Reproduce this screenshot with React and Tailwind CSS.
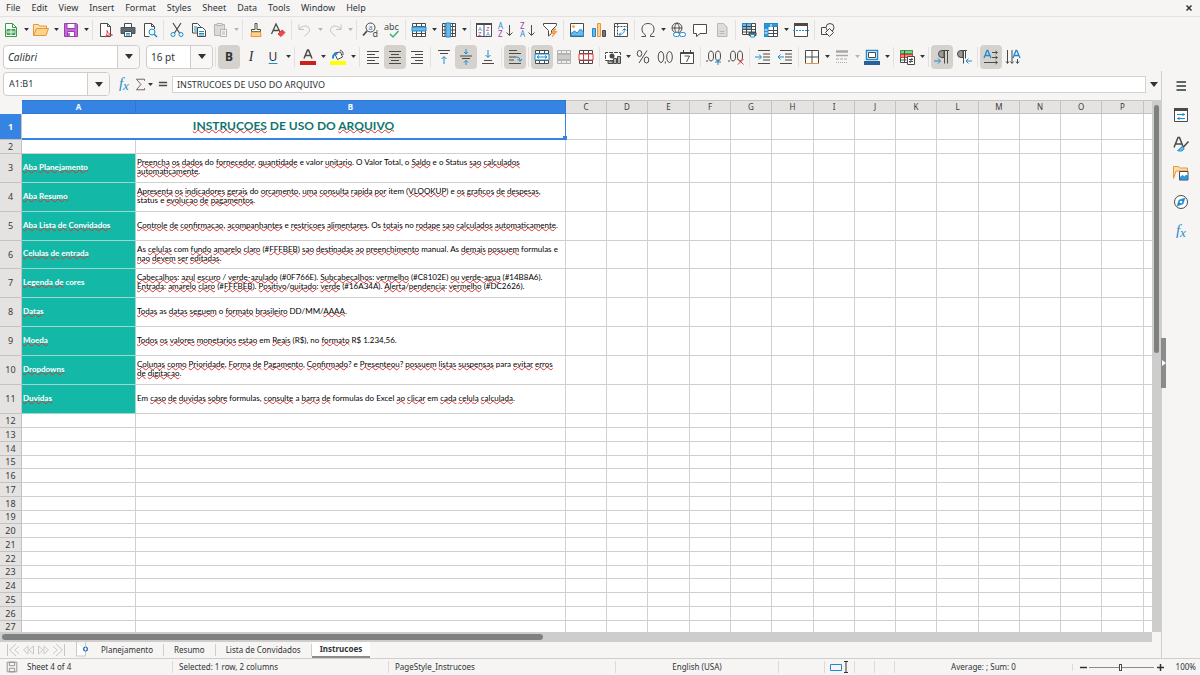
import { useState } from "react";

const MENUS = [
  "File",
  "Edit",
  "View",
  "Insert",
  "Format",
  "Styles",
  "Sheet",
  "Data",
  "Tools",
  "Window",
  "Help",
];

const COLUMNS = "ABCDEFGHIJKLMNOPQRSTUVWXYZ".split("");

const ROW_COUNT = 60;

const CONTENT = {
  3: ["Aba Planejamento", [
    "Preencha os dados do fornecedor, quantidade e valor unitario. O Valor Total, o Saldo e o Status sao calculados",
    "automaticamente.",
  ]],
  4: ["Aba Resumo", [
    "Apresenta os indicadores gerais do orcamento, uma consulta rapida por item (VLOOKUP) e os graficos de despesas,",
    "status e evolucao de pagamentos.",
  ]],
  5: ["Aba Lista de Convidados", [
    "Controle de confirmacao, acompanhantes e restricoes alimentares. Os totais no rodape sao calculados automaticamente.",
  ]],
  6: ["Celulas de entrada", [
    "As celulas com fundo amarelo claro (#FFFBEB) sao destinadas ao preenchimento manual. As demais possuem formulas e",
    "nao devem ser editadas.",
  ]],
  7: ["Legenda de cores", [
    "Cabecalhos: azul escuro / verde-azulado (#0F766E). Subcabecalhos: vermelho (#C8102E) ou verde-agua (#14B8A6).",
    "Entrada: amarelo claro (#FFFBEB). Positivo/quitado: verde (#16A34A). Alerta/pendencia: vermelho (#DC2626).",
  ]],
  8: ["Datas", ["Todas as datas seguem o formato brasileiro DD/MM/AAAA."]],
  9: ["Moeda", ["Todos os valores monetarios estao em Reais (R$), no formato R$ 1.234,56."]],
  10: ["Dropdowns", [
    "Colunas como Prioridade, Forma de Pagamento, Confirmado? e Presenteou? possuem listas suspensas para evitar erros",
    "de digitacao.",
  ]],
  11: ["Duvidas", ["Em caso de duvidas sobre formulas, consulte a barra de formulas do Excel ao clicar em cada celula calculada."]],
};

const SHEETS = ["Planejamento", "Resumo", "Lista de Convidados", "Instrucoes"];

// words the spell checker accepts
const KNOWN = new Set(
  "do e valor O Valor Total o Status item status Os no As com manual formulas cores as em para R a Em Excel DD MM DE USO DO".split(" ")
);

const INK = "#4a4a48";
const BLUE = "#1e8bcd";

const Spell = ({ text }) =>
  text.split(/([A-Za-z0-9]+(?:-[A-Za-z]+)*)/).map((part, i) =>
    i % 2 === 0 || KNOWN.has(part) || /\d/.test(part) ? (
      part
    ) : (
      <span
        key={i}
        className="underline decoration-[#e03030] decoration-wavy decoration-1 -underline-offset-1 [text-decoration-skip-ink:none]"
      >
        {part}
      </span>
    )
  );

const Svg = ({ children, size = 16 }) => (
  <svg
    width={size}
    height={size}
    viewBox="0 0 16 16"
    fill="none"
    stroke={INK}
    strokeWidth="1"
    aria-hidden="true"
    className="shrink-0 overflow-visible"
  >
    {children}
  </svg>
);

const Glyph = ({ x, y, size, color = INK, children }) => (
  <text x={x} y={y} fontSize={size} fill={color} stroke="none" fontFamily="Noto Sans">
    {children}
  </text>
);

const ICONS = {
  newSheet: (
    <>
      <path d="M2.500 1.500h7l4 4v9h-11z" fill="#fff" stroke="#3c9a4b" />
      <path d="M9.500 1.500v4h4" stroke="#3c9a4b" />
      <path d="M4 7.500h8v5h-8z" fill="#5cba68" stroke="#3c9a4b" />
      <path d="M4 10h8M8 7v6" stroke="#e5f5e7" />
    </>
  ),
  open: (
    <>
      <path d="M.5 13.500v-11h5l1 1.500h7v3" fill="#fbe0ae" stroke="#e8963c" />
      <path d="M.5 13.500l3-7h12l-2.500 7z" fill="#fbd38c" stroke="#e8963c" />
    </>
  ),
  save: (
    <>
      <path d="M1.500 1.500h12l1 1v12h-13z" fill="#c46bd0" stroke="#9b3fae" />
      <path d="M4 1.500h8v5h-8z" fill="#fff" stroke="#9b3fae" />
      <path d="M4.500 9.500h7v5h-7z" fill="#fff" stroke="#9b3fae" />
      <path d="M6 11v3" stroke="#9b3fae" strokeWidth="1.500" />
    </>
  ),
  pdf: (
    <>
      <path d="M2.500 1.500h7l3 3v10h-10z" fill="#fff" />
      <path d="M9.500 1.500v3h3" />
      <path d="M7 15c2-2 2.500-4.500 2-6.500 1 3 3.500 4.500 5.500 4.500-2-.6-5 0-7.500 2z" stroke="#e03b3b" />
    </>
  ),
  print: (
    <>
      <path d="M4.500 5v-3.500h7V5" fill="#fff" />
      <path d="M1 5.500h14v6H1z" fill="#5e6a72" stroke="#4a5258" />
      <path d="M4.500 9.500h7v5h-7z" fill="#fff" />
      <path d="M6 11.500h4M6 13h4" stroke={BLUE} />
    </>
  ),
  preview: (
    <>
      <path d="M12.500 7V4.500l-3-3h-7v13h5" fill="#fff" />
      <path d="M9.500 1.500v3h3" />
      <circle cx="10" cy="10" r="3" stroke={BLUE} fill="#eaf5fc" />
      <path d="M12.200 12.200l2.800 2.800" stroke={BLUE} strokeWidth="1.500" />
    </>
  ),
  cut: (
    <>
      <path d="M4 1l6.500 10M12 1L5.500 11" strokeWidth="1.200" />
      <circle cx="4" cy="12.500" r="2" stroke={BLUE} />
      <circle cx="12" cy="12.500" r="2" stroke={BLUE} />
    </>
  ),
  copy: (
    <>
      <path d="M1.500 1.500h5l3 3v6.500h-8z" fill="#fff" />
      <path d="M3 5h3M3 7h3M3 9h3" stroke={BLUE} />
      <path d="M6.500 5.500h5l3 3v6h-8z" fill="#fff" />
      <path d="M8 9.500h5M8 11.500h5M8 13h5" stroke={BLUE} />
    </>
  ),
  paste: (
    <g stroke="#b4b4b2">
      <path d="M1.500 2.500h10v11h-10z" fill="#dadad8" />
      <path d="M4 1.500h5v2h-5z" fill="#eee" />
      <path d="M7.500 7.500h6v7h-6z" fill="#f2f2f0" />
      <path d="M9 10h3M9 12h3" />
    </g>
  ),
  clone: (
    <>
      <path d="M7 1.500h2v6h3.500v2h-9v-2H7z" fill="#fff" />
      <path d="M3.500 10l-.5 4.500h10l-.5-4.500z" fill="#fbd38c" stroke="#e8963c" />
    </>
  ),
  clear: (
    <>
      <path d="M1.500 12L6 2l4.500 9M3.500 8.500h5" strokeWidth="1.300" />
      <path d="M8 12l4-4 3 2.500-4 4z" fill="#f04848" stroke="#e03b3b" />
    </>
  ),
  undo: <path d="M2 2.500v5h5M2.500 7C5 3 12 3 12.500 7.500c.3 2.500-2 4.500-5 6.500" stroke="#c2c2c0" />,
  redo: <path d="M14 2.500v5H9M13.500 7C11 3 4 3 3.500 7.500c-.3 2.500 2 4.500 5 6.500" stroke="#c2c2c0" />,
  find: (
    <>
      <circle cx="8.500" cy="5.500" r="4.500" />
      <path d="M5 9l-4 4.500" strokeWidth="1.800" />
      <Glyph x="6.500" y="8" size="7" color={BLUE}>a</Glyph>
      <Glyph x="10.500" y="15" size="9">d</Glyph>
    </>
  ),
  spelling: (
    <>
      <Glyph x="0" y="8" size="9">abc</Glyph>
      <path d="M6 12l3 3 5.500-6" stroke="#3bb36a" strokeWidth="1.500" />
    </>
  ),
  rows: (
    <>
      <path d="M1.500 1.500h13v13h-13z" fill="#fff" />
      <path d="M1.500 4.500h13M1.500 11.500h13M5.500 1.500v13M10.500 1.500v13" />
      <path d="M1 5h14v4H1z" fill="#6cb8ec" stroke={BLUE} />
    </>
  ),
  cols: (
    <>
      <path d="M1.500 1.500h13v13h-13z" fill="#fff" />
      <path d="M1.500 4.500h13M1.500 8h13M1.500 11.500h13M11.500 1.500v13M4 1.500v13" />
      <path d="M5 1h4.500v14H5z" fill="#6cb8ec" stroke={BLUE} />
    </>
  ),
  sort: (
    <>
      <path d="M.5 1.500h15v13H.5z" fill="#fff" />
      <path d="M0 2h16" strokeWidth="2" />
      <path d="M8 2v12.500" />
      <Glyph x="2" y="8.500" size="6" color={BLUE}>A</Glyph>
      <Glyph x="2" y="14" size="6" color="#9b3fae">Z</Glyph>
      <Glyph x="10" y="8.500" size="6" color="#9b3fae">Z</Glyph>
      <Glyph x="10" y="14" size="6" color={BLUE}>A</Glyph>
    </>
  ),
  asc: (
    <>
      <Glyph x="0" y="7" size="8" color={BLUE}>A</Glyph>
      <Glyph x="0" y="15" size="8" color="#9b3fae">Z</Glyph>
      <path d="M11.500 3v10M8.500 10.500l3 3 3-3" />
    </>
  ),
  desc: (
    <>
      <Glyph x="0" y="7" size="8" color="#9b3fae">Z</Glyph>
      <Glyph x="0" y="15" size="8" color={BLUE}>A</Glyph>
      <path d="M11.500 3v10M8.500 10.500l3 3 3-3" />
    </>
  ),
  filter: (
    <>
      <path d="M1.500 1.500h13v2l-5 5v3l-3 2.500V8.500l-5-5z" fill="#fff" />
      <path d="M12 7l-3 4.500h3L10 15l5-5.500h-3L14 7z" fill="#f7a64a" stroke="#e8862c" strokeWidth=".6" />
    </>
  ),
  image: (
    <>
      <path d="M1.500 1.500h13v13h-13z" fill="#fff" />
      <circle cx="4.500" cy="4.500" r="1.500" fill="#f7a64a" stroke="none" />
      <path d="M2 14v-2.500L5.500 9 8 11l3.500-4 3 3v4z" fill="#6cb8ec" stroke={BLUE} />
    </>
  ),
  chart: (
    <>
      <path d="M1.500 6.500h3v8h-3z" fill="#6cb8ec" stroke={BLUE} />
      <path d="M6.500 1.500h3v13h-3z" fill="#fbd38c" stroke="#e8963c" />
      <path d="M11.500 8.500h3v6h-3z" fill="#777" />
    </>
  ),
  pivot: (
    <>
      <path d="M1.500 1.500h13v13h-13z" fill="#fff" />
      <path d="M1.500 4.500h13M4.500 1.500v13" strokeDasharray="2 1" />
      <path d="M6 12.500c4 0 5.500-2 5.500-5.500M9.500 8.500l2-2 2 2M8 10.500l-2 2 2 2" stroke={BLUE} />
    </>
  ),
  omega: <path d="M1.500 14.500h4v-1.500C3 11.500 2 9.500 2 7c0-3.500 2.500-5.500 6-5.500s6 2 6 5.500c0 2.500-1 4.500-3.500 6v1.500h4" />,
  link: (
    <>
      <circle cx="7" cy="6" r="5" />
      <path d="M2 6h10M7 1c-3 3-3 7 0 10M7 1c3 3 3 7 0 10" />
      <rect x="3.500" y="10.500" width="6" height="4" rx="2" fill="#fff" stroke={BLUE} />
      <rect x="9.500" y="10.500" width="6" height="4" rx="2" fill="#fff" stroke={BLUE} />
    </>
  ),
  comment: <path d="M1.500 2.500h13v9H8l-3.500 3v-3h-3z" fill="#fff" />,
  doc: <path d="M3.500 1.500h6l3.500 3.500v9.500H3.500zM5.500 9.500h5M5.500 11.500h5" fill="#dcdcda" stroke="#b8b8b6" />,
  printArea: (
    <>
      <path d="M1.500 1.500h13v11h-13z" fill="#fff" />
      <path d="M1.500 1.500h9v6h-9z" fill="#6cb8ec" stroke={BLUE} />
      <path d="M1.500 4.500h13M1.500 7.500h13M1.500 10h13M5.500 1.500v11M10.500 1.500v11" />
      <path d="M8 10.500h7v3H8z" fill="#5e6a72" />
      <path d="M9.500 12.500h4v2.500h-4z" fill="#fff" stroke={BLUE} />
    </>
  ),
  freeze: (
    <>
      <path d="M1.500 1.500h13v13h-13z" fill="#fff" />
      <path d="M5 8.500h9.500M5 11.500h9.500M10.500 5v9.500" />
      <path d="M1.500 1.500h13v3h-13zM1.500 1.500h3.500v13H1.500z" fill="#3b97dc" stroke={BLUE} />
      <path d="M1.500 8h3M1.500 11h3M8 2v3" stroke="#fff" />
    </>
  ),
  split: (
    <>
      <path d="M1.500 1.500h13v13h-13z" fill="#fff" />
      <path d="M1 2.500h14" strokeWidth="3" />
      <path d="M0 8.500h16" stroke={BLUE} strokeDasharray="2 1" />
    </>
  ),
  shapes: (
    <>
      <path d="M1.500 5.500h7v7h-7z" fill="#f6f5f4" />
      <circle cx="10" cy="5.500" r="4" fill="#f6f5f4" />
      <path d="M9.500 6.500l4 4-4 4-4-4z" fill="#f6f5f4" />
    </>
  ),
  fontColor: (
    <>
      <path d="M4 9.500L7.500 1h1L12 9.500M5.500 6.500h5" strokeWidth="1.500" />
      <path d="M0 12h16v4H0z" fill="#c9211e" stroke="none" />
    </>
  ),
  highlight: (
    <>
      <path d="M4.500 4l6-1 2 5-5 2.500z" fill="#fff" />
      <path d="M3 9.500c-.5-4 2-5 4.500-4.500" stroke={BLUE} strokeWidth="2" />
      <path d="M10 1c2.500 1 3.500 2.500 3 5" />
      <path d="M0 12h16v4H0z" fill="#ffff00" stroke="none" />
    </>
  ),
  left: <path d="M2 2.500h12M2 5.500h8M2 8.500h12M2 11.500h8M2 14.500h12" />,
  center: <path d="M2 2.500h12M4 5.500h8M2 8.500h12M4 11.500h8M2 14.500h12" />,
  right: <path d="M2 2.500h12M6 5.500h8M2 8.500h12M6 11.500h8M2 14.500h12" />,
  top: (
    <>
      <path d="M2 1.500h12M4 4.500h8" />
      <path d="M8 15V8M5.500 10L8 7.500l2.500 2.500" stroke={BLUE} />
    </>
  ),
  middle: (
    <>
      <path d="M2 7h12M4 9.500h8" />
      <path d="M8 0v5M6 3l2 2 2-2M8 16v-4.500M6 13.500l2-2 2 2" stroke={BLUE} />
    </>
  ),
  bottom: (
    <>
      <path d="M4 11.500h8M2 14.500h12" />
      <path d="M8 1v7M5.500 6L8 8.500 10.500 6" stroke={BLUE} />
    </>
  ),
  wrap: (
    <>
      <path d="M2 1.500h8M2 4.500h12M2 8h7M2 11h5M2 14.500h12" />
      <path d="M9 8c3 0 4 1 4 4M10.500 10l2.500 2.500 2-2.500" stroke={BLUE} />
    </>
  ),
  merge: (
    <>
      <path d="M1.500 1.500h13v13h-13zM1.500 4.500h13M1.500 11.500h13M5.500 1.500v3M10.500 1.500v3M5.500 11.500v3M10.500 11.500v3" fill="#fff" />
      <path d="M1 5h14v6H1z" fill="#fff" stroke={BLUE} />
      <path d="M3 8h10M5 6.500L3 8l2 1.500M11 6.500L13 8l-2 1.500" stroke={BLUE} />
    </>
  ),
  mergeCells: (
    <g stroke="#b4b4b2">
      <path d="M1.500 1.500h13v13h-13zM1.500 4.500h13M1.500 11.500h13M5.500 1.500v3M10.500 1.500v3M5.500 11.500v3M10.500 11.500v3" fill="#eee" />
      <path d="M1.500 5.500h13v5h-13z" fill="#ccc" />
    </g>
  ),
  unmerge: (
    <>
      <path d="M1.500 1.500h13v13h-13zM1.500 4.500h13M1.500 11.500h13M5.500 1.500v3M10.500 1.500v3M5.500 11.500v3M10.500 11.500v3" fill="#fff" />
      <path d="M1 5h14v6H1zM5.500 5v6M10.500 5v6" fill="#fff" stroke="#e03b3b" />
    </>
  ),
  currency: (
    <>
      <path d="M9 11.500H.5v-8h15V7" fill="#fff" strokeDasharray="4 1" />
      <circle cx="7" cy="7" r="2.500" fill={INK} stroke="none" />
      <path d="M3 13.500v-1.500h5v2.500H3zM8.500 9.500h3v5h-3zM12.500 7.500h3v7h-3z" fill="#b0b0ae" />
    </>
  ),
  percent: (
    <>
      <ellipse cx="4.500" cy="4.500" rx="2.300" ry="3" />
      <ellipse cx="11.500" cy="11" rx="2.300" ry="3" />
      <path d="M12 1.500l-8 12.500" />
    </>
  ),
  number: (
    <>
      <ellipse cx="4" cy="8" rx="2.800" ry="5.500" />
      <ellipse cx="12.500" cy="8" rx="2.800" ry="5.500" />
      <path d="M8.300 12.500v2" />
    </>
  ),
  date: (
    <>
      <path d="M1.500 3.500h13v11h-13z" fill="#fff" />
      <path d="M1.500 4h13" strokeWidth="2" />
      <path d="M4.500 1v3M11.500 1v3M5.500 7h5l-3 6" />
    </>
  ),
  addDecimal: (
    <>
      <ellipse cx="5" cy="7" rx="2.500" ry="5" />
      <ellipse cx="12" cy="7" rx="2.500" ry="5" />
      <path d="M1 11v2" />
      <path d="M12 10v6M9 13h6" stroke={BLUE} />
    </>
  ),
  delDecimal: (
    <>
      <ellipse cx="5" cy="7" rx="2.500" ry="5" />
      <ellipse cx="12" cy="7" rx="2.500" ry="5" />
      <path d="M1 11v2" />
      <path d="M10 10l5.500 5.500M15.500 10L10 15.500" stroke="#e03b3b" />
    </>
  ),
  indent: (
    <>
      <path d="M3 1.500h12M8 5h7M8 8h7M8 11h7M3 14.500h12" />
      <path d="M0 8h6M4 5.500L6.500 8 4 10.500" stroke={BLUE} />
    </>
  ),
  outdent: (
    <>
      <path d="M3 1.500h12M8 5h7M8 8h7M8 11h7M3 14.500h12" />
      <path d="M1 8h6M3.500 5.500L1 8l2.500 2.500" stroke={BLUE} />
    </>
  ),
  borders: (
    <>
      <path d="M1.500 1.500h13v13h-13zM8 1.500v13M1.500 8h13" fill="#fff" />
      <path d="M1 14.500h14" stroke="#e8963c" />
    </>
  ),
  borderStyle: (
    <g stroke="#a8a8a6">
      <path d="M2 2.500h12" strokeWidth="2.500" />
      <path d="M2 6.500h12" strokeWidth="1.500" />
      <path d="M2 10h12" strokeDasharray="3 1" />
      <path d="M2 13.500h12" strokeDasharray="1 1" />
    </g>
  ),
  borderColor: (
    <>
      <path d="M2.500 1.500h11v9h-11z" fill="#fff" stroke={BLUE} strokeWidth="1.500" />
      <path d="M4.500 3.500h7v5h-7z" />
      <path d="M0 12h16v4H0z" fill="#2a6099" stroke="none" />
    </>
  ),
  conditional: (
    <>
      <path d="M1.500 1.500h12v12h-12z" fill="#fff" />
      <path d="M1.500 1.500h12v3h-12z" fill="#7dd08a" stroke="#3c9a4b" />
      <path d="M1.500 5.500h12v3h-12z" fill="#f58a80" stroke="#e03b3b" />
      <path d="M5.500 1.500v12M1.500 11h6" />
      <path d="M8.500 7.500h7v8h-7z" fill="#fff" />
      <path d="M10 10.500h4M10 12.500h4M13 9l-2 5" />
    </>
  ),
  ltr: (
    <>
      <path d="M8 9V1.500M8 1.500h7M10.500 1.500v13M13.500 1.500v13" />
      <path d="M8 1.500a3.500 3.500 0 000 7h2v-7z" fill="#999" />
      <path d="M0 12h6M4 9.500L6.500 12 4 14.500" stroke={BLUE} />
    </>
  ),
  rtl: (
    <>
      <path d="M5 1.500h6M7.500 1.500v13M9.500 1.500v8" />
      <path d="M5 1.500a3.500 3.500 0 000 7h2v-7z" fill="#999" />
      <path d="M10 12h6M12.500 9.500L10 12l2.500 2.500" stroke={BLUE} />
    </>
  ),
  horizontalText: (
    <>
      <path d="M1 9l3-7.500h.8L8 9M2 6.500h5" stroke={BLUE} strokeWidth="1.300" />
      <path d="M9 3.500h5M12.500 2l2 1.500-2 1.500M9 8.500h5M12.500 7l2 1.500-2 1.500M1 13.500h13M12.500 12l2 1.500-2 1.500" />
    </>
  ),
  verticalText: (
    <>
      <path d="M8 9l3-7.500h.8L15 9M9 6.500h5" stroke={BLUE} strokeWidth="1.300" />
      <path d="M2.500 1v13M1 12.500l1.500 2 1.500-2M7 1v13M5.500 12.500l1.500 2 1.500-2M12.500 10v4M11 12.500l1.500 2 1.500-2" />
    </>
  ),
  settings: <path d="M3.500 4h9.500M3.500 8h9.500M3.500 12h9.500" stroke="#2e3436" strokeWidth="1.500" />,
  properties: (
    <>
      <path d="M1.500 1.500h13v13h-13z" fill="#fff" />
      <path d="M1 2.500h14" strokeWidth="3" />
      <path d="M4 7.500h8M4 11.500h8M10 6v3M6 10v3" stroke={BLUE} />
    </>
  ),
  styles: (
    <>
      <path d="M1 11.500L5 1.500h1.500l3.500 9M2.500 8h6" strokeWidth="1.500" />
      <path d="M15.500 5.500L9.500 12" strokeWidth="1.500" />
      <path d="M9.500 10.500l1.500 2c-1 3-4 3-6.500 2 2 0 2-3 5-4z" fill="#6cb8ec" stroke={BLUE} />
    </>
  ),
  gallery: (
    <>
      <path d="M.5 13.500v-12h5l1 1.500h8v3H3z" fill="#fbe0ae" stroke="#e8963c" />
      <path d="M6.500 6.500h8.500v8.500h-8.500z" fill="#fff" />
      <path d="M7 14.500v-2l2.500-2 2 1.500 2-2 1 1v3.500z" fill="#3b97dc" stroke={BLUE} />
    </>
  ),
  navigator: (
    <>
      <circle cx="8" cy="8" r="6.500" fill="#fff" />
      <path d="M12 4L10 10l-6 2 2-6z" fill={BLUE} stroke={BLUE} strokeWidth=".5" />
      <circle cx="8" cy="8" r="1.300" fill="#fff" stroke="none" />
    </>
  ),
  sigma: <path d="M13 3.500v-2H3L8.500 8 3 14.500h10v-2" />,
  equals: <path d="M2.500 6h11M2.500 10h11" strokeWidth="1.800" />,
  addSheet: (
    <>
      <path d="M2.500 0v14h9v-5M11.500 4V0" fill="#fff" stroke="#c8c8c6" />
      <circle cx="11.500" cy="7" r="2.500" fill="#2f6fc0" stroke="none" />
      <path d="M11.500 5.500v3M10 7h3" stroke="#fff" />
    </>
  ),
  saved: (
    <>
      <path d="M2.500 2.500h11v11h-11z" stroke="#8a8a88" />
      <path d="M5 2.500h6v4H5zM5 9.500h6v4H5z" stroke="#8a8a88" />
    </>
  ),
};

const STANDARD = [
  [["newSheet", "New", 1], ["open", "Open", 1], ["save", "Save", 1]],
  [["pdf", "Export as PDF"], ["print", "Print"], ["preview", "Print Preview"]],
  [["cut", "Cut"], ["copy", "Copy"], ["paste", "Paste", 2]],
  [["clone", "Clone Formatting"], ["clear", "Clear Formatting"]],
  [["undo", "Undo", 2], ["redo", "Redo", 2]],
  [["find", "Find and Replace"], ["spelling", "Spelling"]],
  [["rows", "Row", 1], ["cols", "Column", 1]],
  [["sort", "Sort"], ["asc", "Sort Ascending"], ["desc", "Sort Descending"], ["filter", "AutoFilter"]],
  [["image", "Image"], ["chart", "Chart"], ["pivot", "Pivot Table"]],
  [["omega", "Special Character", 1], ["link", "Hyperlink"], ["comment", "Comment"], ["doc", "Headers and Footers"]],
  [["printArea", "Define Print Area"], ["freeze", "Freeze Rows and Columns", 1], ["split", "Split Window"]],
  [["shapes", "Show Draw Functions"]],
];

const FORMATTING = [
  [["fontColor", "Font Color", 1], ["highlight", "Background Color", 1]],
  [["left", "Align Left"], ["center", "Center Horizontally", 0, true], ["right", "Align Right"]],
  [["top", "Align Top"], ["middle", "Center Vertically", 0, true], ["bottom", "Align Bottom"]],
  [["wrap", "Wrap Text", 0, true]],
  [["merge", "Merge and Center", 0, true], ["mergeCells", "Merge Cells"], ["unmerge", "Unmerge Cells"]],
  [["currency", "Format as Currency", 1], ["percent", "Format as Percent"], ["number", "Format as Number"], ["date", "Format as Date"]],
  [["addDecimal", "Add Decimal Place"], ["delDecimal", "Delete Decimal Place"]],
  [["indent", "Increase Indent"], ["outdent", "Decrease Indent"]],
  [["borders", "Borders", 1], ["borderStyle", "Border Style", 2], ["borderColor", "Border Color", 1]],
  [["conditional", "Conditional Formatting", 1]],
  [["ltr", "Left-To-Right", 0, true], ["rtl", "Right-To-Left"]],
  [["horizontalText", "Text direction from left to right", 0, true], ["verticalText", "Text direction from top to bottom"]],
];

const Caret = ({ small, muted }) => (
  <svg
    width={small ? 5 : 8}
    height={small ? 3 : 5}
    viewBox="0 0 8 5"
    fill={muted ? "#b4b4b2" : "#2e3436"}
    aria-hidden="true"
  >
    <path d="M0 0h8L4 5z" />
  </svg>
);

const Separator = () => <span className="mx-0.5 h-5 w-px shrink-0 bg-[#e3e1df]" />;

const ToolButton = ({ label, active, children }) => (
  <button
    aria-label={label}
    className={`flex h-6 w-[22px] shrink-0 items-center justify-center rounded ${active ? "bg-[#d5d1cd]" : ""}`}
  >
    {children}
  </button>
);

const ArrowButton = ({ label, muted }) => (
  <button aria-label={label} className="flex h-6 w-2 shrink-0 items-center justify-center">
    <Caret small muted={muted} />
  </button>
);

const ToolGroups = ({ groups }) =>
  groups.map((group, i) => (
    <div key={i} className="flex items-center">
      {i > 0 && <Separator />}
      {group.map(([icon, label, arrow, active]) => (
        <div key={icon} className="flex items-center">
          <ToolButton label={label} active={active}>
            <Svg>{ICONS[icon]}</Svg>
          </ToolButton>
          {arrow > 0 && <ArrowButton label={`${label} options`} muted={arrow === 2} />}
        </div>
      ))}
    </div>
  ));

const Combo = ({ label, value, className, italic }) => (
  <div className={`relative shrink-0 ${className}`}>
    <select
      aria-label={label}
      className={`block h-6 w-full appearance-none rounded border border-[#cfccc9] bg-white pl-1 text-[10px] leading-4 ${italic ? "italic" : ""}`}
    >
      <option>{value}</option>
    </select>
    <span className="pointer-events-none absolute inset-y-px right-px flex w-[22px] items-center justify-center rounded-r border-l border-[#cfccc9] bg-[#f8f7f6]">
      <Caret />
    </span>
  </div>
);

const FxIcon = () => (
  <svg width="14" height="18" viewBox="0 0 14 18" fill={BLUE} aria-hidden="true">
    <text x="2" y="13" fontSize="15" fontStyle="italic" fontFamily="Liberation Serif">f</text>
    <text x="6" y="15" fontSize="13" fontStyle="italic" fontFamily="Liberation Serif">x</text>
  </svg>
);

const FormulaBar = () => (
  <div className="mb-[3px] flex h-[26px] items-center pl-[3px]">
    <div className="flex h-6 w-[107px] shrink-0 overflow-hidden rounded border border-[#cfccc9] bg-white">
      <input
        aria-label="Name Box"
        defaultValue="A1:B1"
        className="w-full min-w-0 bg-transparent pl-[5px] text-[9px] outline-none"
      />
      <button
        aria-label="Named ranges"
        className="flex w-[22px] shrink-0 items-center justify-center border-l border-[#cfccc9] bg-[#f8f7f6]"
      >
        <Caret />
      </button>
    </div>
    <div className="ml-1 flex items-center">
      <button aria-label="Function Wizard" className="flex w-5 justify-center">
        <FxIcon />
      </button>
      <button aria-label="Select Function" className="flex w-3 justify-center">
        <Svg size={13}>{ICONS.sigma}</Svg>
      </button>
      <ArrowButton label="Function options" />
      <button aria-label="Formula" className="flex w-[18px] justify-center">
        <Svg size={12}>{ICONS.equals}</Svg>
      </button>
    </div>
    <input
      aria-label="Input line"
      defaultValue="INSTRUCOES DE USO DO ARQUIVO"
      className="h-[17px] min-w-0 flex-1 border border-[#d5d3d1] bg-white pl-1 text-[9px] outline-none"
    />
    <button aria-label="Expand Formula Bar" className="flex w-[15px] justify-center">
      <Caret />
    </button>
  </div>
);

const columnWidth = (i) => {
  if (i === 0) return "w-[114px]";
  if (i === 1) return "w-[430px]";
  return [4, 7, 11, 15].includes(i) ? "w-[42px]" : "w-[41px]";
};

const rowHeight = (n) => {
  if (n === 1) return "h-[26px]";
  if (n === 2) return "h-[14px]";
  if (n === 6) return "h-[28px]";
  if (n <= 11) return "h-[29px]";
  return n % 4 === 3 ? "h-[13px]" : "h-[14px]";
};

const GRID_LINE = "border-r border-b border-[#d0d0d0]";

const Row = ({ n }) => {
  const content = CONTENT[n];

  return (
    <tr className={rowHeight(n)}>
      <th
        scope="row"
        className={`border-r border-b border-[#c4c3c1] p-0 text-center text-[9px] leading-3 ${
          n === 1 ? "bg-[#3584e4] font-bold text-white" : "bg-[#e4e3e1] font-normal text-[#3a3a38]"
        }`}
      >
        {n}
      </th>

      {n === 1 && (
        <td
          colSpan={2}
          className="relative border-r border-b-2 border-[#3584e4] p-0 text-center align-middle font-[Lato] text-[12px] leading-5 font-bold text-[#0f766e]"
        >
          <Spell text="INSTRUCOES DE USO DO ARQUIVO" />
          <span className="absolute -right-0.5 -bottom-0.5 size-1 bg-[#3584e4]" />
        </td>
      )}

      {content && (
        <>
          <td className="border-r border-b border-[#9fd8d0] bg-[#14b8a6] p-0 pb-0.5 pl-px align-middle font-[Lato] text-[8px] leading-[9px] font-bold whitespace-nowrap text-white">
            <Spell text={content[0]} />
          </td>
          <td className={`${GRID_LINE} p-0 pb-0.5 pl-px align-middle font-[Lato] text-[8px] leading-[9px] whitespace-nowrap text-black`}>
            {content[1].map((line) => (
              <div key={line}>
                <Spell text={line} />
              </div>
            ))}
          </td>
        </>
      )}

      {COLUMNS.slice(n === 1 || content ? 2 : 0).map((c) => (
        <td key={c} className={`${GRID_LINE} p-0`} />
      ))}
    </tr>
  );
};

const Grid = () => (
  <div className="min-h-0 min-w-0 flex-1 overflow-hidden bg-white">
    <table className="w-px table-fixed border-separate border-spacing-0">
      <colgroup>
        <col className="w-[22px]" />
        {COLUMNS.map((c, i) => (
          <col key={c} className={columnWidth(i)} />
        ))}
      </colgroup>
      <thead>
        <tr className="h-[14px]">
          <td className="bg-[#f6f5f4] p-0" />
          {COLUMNS.map((c, i) => (
            <th
              key={c}
              scope="col"
              className={`border-t border-r border-b p-0 text-center text-[8px] leading-3 ${
                i < 2
                  ? "border-[#2f76cc] bg-[#3584e4] font-bold text-white"
                  : "border-[#c4c3c1] bg-[#e4e3e1] font-normal text-[#3a3a38]"
              }`}
            >
              {c}
            </th>
          ))}
        </tr>
      </thead>
      <tbody>
        {Array.from({ length: ROW_COUNT }, (_, i) => (
          <Row key={i} n={i + 1} />
        ))}
      </tbody>
    </table>
  </div>
);

const TAB_NAV = [
  ["First sheet", "M3.500 2v12M12 2L5.500 8 12 14M15 4l-4 4 4 4"],
  ["Previous sheet", "M8 4L3.500 8 8 12zM13.500 4L9 8l4.500 4z"],
  ["Next sheet", "M8 4l4.500 4L8 12zM2.500 4L7 8l-4.500 4z"],
  ["Last sheet", "M12.500 2v12M4 2l6.500 6L4 14M1 4l4 4-4 4"],
];

const SheetTabs = () => {
  const [active, setActive] = useState("Instrucoes");

  return (
    <div className="flex h-4 items-stretch text-[8px]">
      <div className="flex w-[73px] shrink-0 items-center pl-1">
        {TAB_NAV.map(([label, d]) => (
          <button key={label} aria-label={label} className="w-4">
            <Svg>
              <path d={d} stroke="#c8c8c6" />
            </Svg>
          </button>
        ))}
      </div>
      <button aria-label="Add Sheet" className="flex w-[18px] justify-center">
        <Svg>{ICONS.addSheet}</Svg>
      </button>
      {SHEETS.map((sheet) => (
        <button
          key={sheet}
          onClick={() => setActive(sheet)}
          className={
            sheet === active
              ? "border-b-2 border-[#8b8b89] bg-white px-2 font-bold"
              : "my-0.5 border-r border-[#cfcecc] px-2.5 leading-3"
          }
        >
          {sheet}
        </button>
      ))}
    </div>
  );
};

const SideBar = () => (
  <aside className="relative flex w-[39px] shrink-0 flex-col items-center border-l border-[#cfcecc]">
    {["settings", "properties", "styles", "gallery", "navigator"].map((name) => (
      <button key={name} aria-label={name} className="flex h-[29px] w-7 items-center justify-center">
        <Svg>{ICONS[name]}</Svg>
      </button>
    ))}
    <button aria-label="functions" className="flex h-[29px] w-7 items-center justify-center">
      <FxIcon />
    </button>
    <button
      aria-label="Hide sidebar"
      className="absolute top-[267px] -left-px flex h-[50px] w-[5px] items-center justify-center bg-[#8b8b89]"
    >
      <svg width="4" height="6" viewBox="0 0 4 6" fill="#fff" aria-hidden="true">
        <path d="M0 0l4 3-4 3z" />
      </svg>
    </button>
  </aside>
);

const StatusBar = () => (
  <footer className="flex h-[17px] shrink-0 items-center border-t border-[#cfcecc] text-[8px] *:shrink-0">
    <span className="flex w-6 justify-center">
      <Svg size={14}>{ICONS.saved}</Svg>
    </span>
    <span className="w-[148px] pl-[3px]">Sheet 4 of 4</span>
    <span className="w-[216px] border-l border-[#dddbd9] pl-1.5">Selected: 1 row, 2 columns</span>
    <span className="w-[227px] border-l border-[#dddbd9] pl-1.5">PageStyle_Instrucoes</span>
    <span className="w-[163px] border-l border-[#dddbd9] text-center">English (USA)</span>
    <span className="h-3 w-[46px] border-l border-[#dddbd9]" />
    <span className="flex w-[30px] items-center justify-center gap-0.5 border-l border-[#dddbd9]">
      <svg width="22" height="12" viewBox="0 0 22 12" fill="none" aria-hidden="true">
        <path d="M1.500 3.500h11v6h-11z" stroke={BLUE} />
        <path d="M15 .5h4M17 .5v11M15 11.500h4" stroke="#2e3436" />
      </svg>
    </span>
    <span className="h-3 w-5 border-l border-[#dddbd9]" />
    <span className="h-3 w-5 border-l border-[#dddbd9]" />
    <span className="min-w-[178px] flex-1 border-l border-[#dddbd9] text-center">Average: ; Sum: 0</span>
    <div className="flex items-center border-l border-[#dddbd9] pl-1">
      <button aria-label="Zoom out" className="flex w-3 justify-center">
        <svg width="7" height="7" viewBox="0 0 7 7" stroke="#2e3436" strokeWidth="1.500" aria-hidden="true">
          <path d="M0 3.500h7" />
        </svg>
      </button>
      <input
        type="range"
        aria-label="Zoom"
        min="0"
        max="200"
        defaultValue="98"
        className="h-px w-[65px] appearance-none bg-[#8b8b89] [&::-webkit-slider-thumb]:h-[7px] [&::-webkit-slider-thumb]:w-[3px] [&::-webkit-slider-thumb]:appearance-none [&::-webkit-slider-thumb]:border [&::-webkit-slider-thumb]:border-[#4a4a48] [&::-webkit-slider-thumb]:bg-white"
      />
      <button aria-label="Zoom in" className="flex w-3 justify-center">
        <svg width="7" height="7" viewBox="0 0 7 7" stroke="#2e3436" strokeWidth="1.500" aria-hidden="true">
          <path d="M0 3.500h7M3.500 0v7" />
        </svg>
      </button>
    </div>
    <span className="w-9 pr-1.5 text-right">100%</span>
  </footer>
);

const App = () => {
  return (
    <div className="flex h-screen flex-col overflow-hidden bg-[#f6f5f4] font-['Noto_Sans',sans-serif] text-[#2e3436]">

      <header className="flex h-[17px] shrink-0 items-center border-b border-[#e4e2e0]">
        <nav className="flex flex-1 items-center pl-1.5 text-[9px]">
          {MENUS.map((menu) => (
            <button key={menu} className="mr-[11px]">
              {menu}
            </button>
          ))}
        </nav>
        <button aria-label="Close document" className="flex w-[22px] justify-center">
          <svg width="6" height="6" viewBox="0 0 6 6" stroke="#2e3436" strokeWidth="1.500" aria-hidden="true">
            <path d="M.5.5l5 5M5.500.5l-5 5" />
          </svg>
        </button>
      </header>

      <div className="flex h-[27px] shrink-0 items-center overflow-hidden pb-0.5">
        <ToolGroups groups={STANDARD} />
      </div>

      <div className="flex h-[27px] shrink-0 items-center overflow-hidden pb-0.5 pl-[3px]">
        <Combo label="Font Name" value="Calibri" italic className="mr-1.5 w-[137px]" />
        <Combo label="Font Size" value="16 pt" className="w-[67px]" />
        <Separator />
        <ToolButton label="Bold" active>
          <span className="text-[12px] font-bold">B</span>
        </ToolButton>
        <ToolButton label="Italic">
          <span className="font-['Liberation_Serif',serif] text-[14px] italic">I</span>
        </ToolButton>
        <ToolButton label="Underline">
          <span className="text-[12px] underline decoration-[#1e8bcd] underline-offset-2">U</span>
        </ToolButton>
        <ArrowButton label="Underline options" />
        <Separator />
        <ToolGroups groups={FORMATTING} />
      </div>

      <main className="flex min-h-0 flex-1">
        <div className="flex min-w-0 flex-1 flex-col">
          <FormulaBar />
          <div className="flex min-h-0 flex-1">
            <Grid />
            <div className="w-[9px] shrink-0 bg-[#cdcdcd] pt-[5px]">
              <div className="mx-auto h-[47%] w-[5px] rounded-full bg-[#7f8180]" />
            </div>
          </div>
          <div className="mr-[9px] h-2.5 shrink-0 bg-[#cdcdcd] py-0.5 pl-0.5">
            <div className="h-1.5 w-[47%] rounded-full bg-[#7f8180]" />
          </div>
          <SheetTabs />
        </div>
        <SideBar />
      </main>

      <StatusBar />

    </div>
  );
};

export default App;
